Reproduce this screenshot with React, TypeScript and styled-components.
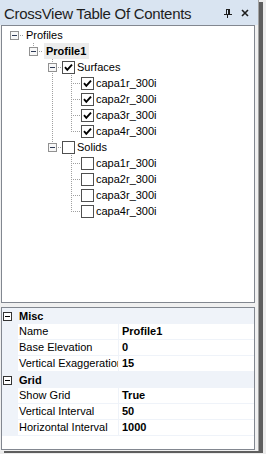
import React from "react";
import styled, { createGlobalStyle } from "styled-components";

const Global = createGlobalStyle`
  html, body { margin: 0; padding: 0; background: #ececec; }
  body { font-family: "Liberation Sans", Arial, sans-serif; }
  * { box-sizing: border-box; }
`;

const Frame = styled.div`
  width: 266px;
  height: 454px;
  background: #ececec;
  overflow: hidden;
`;

const Window = styled.div`
  width: 259px;
  height: 451px;
  display: flex;
  flex-direction: column;
  background: #f0f0f0;
  border-right: 1px solid #a3a3a3;
  box-shadow: 4px 2px 0 #5e5e5e;
`;

const TitleBar = styled.div`
  height: 25px;
  flex: none;
  display: flex;
  align-items: center;
  justify-content: space-between;
  background: #d9e4f1;
  padding: 1px 9px 0 4px;
`;

const Title = styled.span`
  font-size: 15px;
  letter-spacing: -0.3px;
  color: #1e1e1e;
  white-space: nowrap;
`;

const TitleButtons = styled.div`
  display: flex;
  align-items: center;
  gap: 9px;
`;

const Body = styled.div`
  flex: 1;
  display: flex;
  flex-direction: column;
  gap: 4px;
  padding: 0 3px 1px 1px;
  min-height: 0;
`;

const TreePanel = styled.div`
  height: 278px;
  flex: none;
  background: #fff;
  border: 1px solid #828790;
  padding: 1px 0 0 3px;
`;

const TreeRow = styled.div`
  display: flex;
  align-items: center;
  height: 16px;
`;

const Indent = styled.div`
  width: 19px;
  height: 16px;
  flex: none;
`;

const NodeLabel = styled.span<{ $bold?: boolean; $selected?: boolean }>`
  font-size: 11px;
  line-height: 16px;
  height: 16px;
  padding: 0 3px 0 2px;
  color: #000;
  white-space: nowrap;
  font-weight: ${(p) => (p.$bold ? 700 : 400)};
  background: ${(p) => (p.$selected ? "#ececec" : "transparent")};
  margin-left: ${(p) => (p.$selected ? "1px" : "0")};
`;

const Grid = styled.div`
  flex: 1;
  background: #fff;
  border: 1px solid #828790;
  display: flex;
  flex-direction: column;
`;

const CategoryRow = styled.div`
  display: flex;
  align-items: center;
  height: 16px;
  background: #eff3f9;
`;

const Gutter = styled.div`
  width: 16px;
  height: 100%;
  flex: none;
  display: flex;
  align-items: center;
  padding-left: 1px;
`;

const CategoryName = styled.span`
  font-size: 11px;
  font-weight: 700;
  color: #000;
  padding-left: 1px;
`;

const PropRow = styled.div`
  display: flex;
  height: 16px;
`;

const PropGutter = styled.div`
  width: 16px;
  flex: none;
  background: #eff3f9;
`;

const PropLabel = styled.div`
  width: 101px;
  flex: none;
  font-size: 11px;
  line-height: 15px;
  color: #000;
  padding-left: 1px;
  white-space: nowrap;
  overflow: hidden;
  border-right: 1px solid #eff3f9;
  border-bottom: 1px solid #eff3f9;
`;

const PropValue = styled.div`
  flex: 1;
  font-size: 11px;
  font-weight: 700;
  line-height: 15px;
  color: #000;
  padding-left: 3px;
  border-bottom: 1px solid #eff3f9;
`;

type Conn = "none" | "pass" | "tee" | "elbow" | "root";

const DOT = "#a0a0a0";

const Connector = ({ kind, expander }: { kind: Conn; expander?: boolean }) => {
  const v: React.ReactNode[] = [];
  if (kind === "pass") {
    v.push(<line key="p" x1={9.5} y1={0} x2={9.5} y2={16} />);
  }
  if (kind === "tee" || kind === "elbow") {
    if (expander) {
      v.push(<line key="t" x1={9.5} y1={0} x2={9.5} y2={4} />);
      if (kind === "tee") v.push(<line key="b" x1={9.5} y1={14} x2={9.5} y2={16} />);
    } else {
      v.push(<line key="t" x1={9.5} y1={0} x2={9.5} y2={kind === "tee" ? 16 : 9} />);
    }
  }
  if (kind !== "none" && kind !== "pass") {
    v.push(<line key="h" x1={expander ? 15 : 11} y1={8.5} x2={19} y2={8.5} />);
  }
  return (
    <svg width={19} height={16} viewBox="0 0 19 16" shapeRendering="crispEdges" style={{ flex: "none", display: "block" }}>
      <g stroke={DOT} strokeWidth={1} strokeDasharray="1 1">{v}</g>
      {expander && (
        <g>
          <rect x={5.5} y={4.5} width={8} height={8} fill="#f7f7f7" stroke="#919191" />
          <line x1={7} y1={8.5} x2={12} y2={8.5} stroke="#2d3a55" />
        </g>
      )}
    </svg>
  );
};

const CheckBox = ({ checked }: { checked: boolean }) => (
  <svg width={13} height={13} viewBox="0 0 13 13" style={{ flex: "none", display: "block" }}>
    <rect x={0.5} y={0.5} width={12} height={12} fill="#fff" stroke="#4f4f4f" shapeRendering="crispEdges" />
    {checked && <polyline points="3,6.2 5.3,8.8 10,3.6" fill="none" stroke="#000" strokeWidth={1.9} />}
  </svg>
);

const PGExpander = () => (
  <svg width={9} height={9} viewBox="0 0 9 9" shapeRendering="crispEdges" style={{ display: "block" }}>
    <rect x={0.5} y={0.5} width={8} height={8} fill="#fff" stroke="#333" />
    <line x1={2} y1={4.5} x2={7} y2={4.5} stroke="#000" />
  </svg>
);

const PinIcon = () => (
  <svg width={8} height={9} viewBox="0 0 8 9" shapeRendering="crispEdges" style={{ display: "block" }}>
    <g fill="#1e1e1e">
      <rect x={2} y={0} width={1} height={5} />
      <rect x={2} y={0} width={4} height={1} />
      <rect x={4} y={0} width={2} height={5} />
      <rect x={0} y={5} width={8} height={1} />
      <rect x={3} y={6} width={1} height={3} />
    </g>
  </svg>
);

const CloseIcon = () => (
  <svg width={8} height={8} viewBox="0 0 8 8" style={{ display: "block" }}>
    <path d="M1 1 L7 7 M7 1 L1 7" stroke="#1e1e1e" strokeWidth={1.6} />
  </svg>
);

interface NodeData {
  cells: Conn[];
  expander?: boolean;
  check?: boolean;
  label: string;
  bold?: boolean;
  selected?: boolean;
}

const leaves = (checked: boolean, parentHasNext: boolean): NodeData[] =>
  ["capa1r_300i", "capa2r_300i", "capa3r_300i", "capa4r_300i"].map((label, i) => ({
    cells: ["none", "none", parentHasNext ? "pass" : "none", i === 3 ? "elbow" : "tee"],
    check: checked,
    label,
  }));

const nodes: NodeData[] = [
  { cells: ["root"], expander: true, label: "Profiles" },
  { cells: ["none", "elbow"], expander: true, label: "Profile1", bold: true, selected: true },
  { cells: ["none", "none", "tee"], expander: true, check: true, label: "Surfaces" },
  ...leaves(true, true),
  { cells: ["none", "none", "elbow"], expander: true, check: false, label: "Solids" },
  ...leaves(false, false),
];

const categories = [
  {
    name: "Misc",
    props: [
      ["Name", "Profile1"],
      ["Base Elevation", "0"],
      ["Vertical Exaggeration", "15"],
    ],
  },
  {
    name: "Grid",
    props: [
      ["Show Grid", "True"],
      ["Vertical Interval", "50"],
      ["Horizontal Interval", "1000"],
    ],
  },
];

export default function App() {
  return (
    <Frame>
      <Global />
      <Window>
        <TitleBar>
          <Title>CrossView Table Of Contents</Title>
          <TitleButtons>
            <PinIcon />
            <CloseIcon />
          </TitleButtons>
        </TitleBar>
        <Body>
          <TreePanel>
            {nodes.map((n, i) => (
              <TreeRow key={i}>
                {n.cells.map((c, j) => {
                  const own = j === n.cells.length - 1;
                  if (c === "none") return <Indent key={j} />;
                  return <Connector key={j} kind={c} expander={own && n.expander} />;
                })}
                {n.check !== undefined && <CheckBox checked={n.check} />}
                <NodeLabel $bold={n.bold} $selected={n.selected}>
                  {n.label}
                </NodeLabel>
              </TreeRow>
            ))}
          </TreePanel>
          <Grid>
            {categories.map((cat) => (
              <React.Fragment key={cat.name}>
                <CategoryRow>
                  <Gutter>
                    <PGExpander />
                  </Gutter>
                  <CategoryName>{cat.name}</CategoryName>
                </CategoryRow>
                {cat.props.map(([k, v]) => (
                  <PropRow key={k}>
                    <PropGutter />
                    <PropLabel>{k}</PropLabel>
                    <PropValue>{v}</PropValue>
                  </PropRow>
                ))}
              </React.Fragment>
            ))}
          </Grid>
        </Body>
      </Window>
    </Frame>
  );
}
